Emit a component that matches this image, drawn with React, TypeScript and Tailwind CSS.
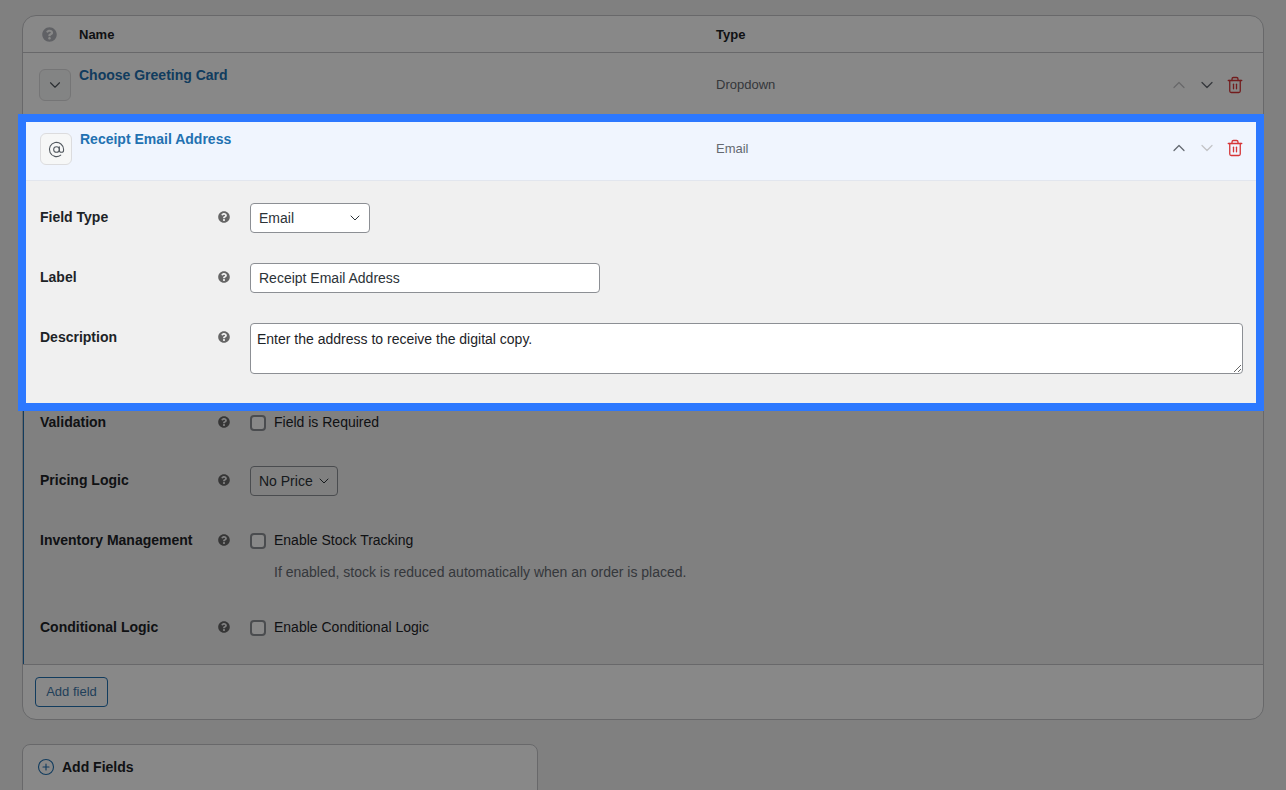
import { AtSign, ChevronDown, ChevronUp, CirclePlus, Trash2 } from "lucide-react";
import { FaQuestionCircle } from "react-icons/fa";

function Help() {
  return <FaQuestionCircle size={12} className="text-[#666666]" />;
}

function RowActions({ upOff, downOff }: { upOff?: boolean; downOff?: boolean }) {
  return (
    <div className="flex items-center gap-2">
      <ChevronUp size={20} strokeWidth={1.5} className={upOff ? "text-[#c3c4c7]" : "text-[#646970]"} />
      <ChevronDown size={20} strokeWidth={1.5} className={downOff ? "text-[#c3c4c7]" : "text-[#646970]"} />
      <Trash2 size={18} strokeWidth={1.75} className="mx-px text-[#d63638]" />
    </div>
  );
}

function FormRow({ label, className, children }: { label: string; className: string; children: React.ReactNode }) {
  return (
    <div className={`flex items-start ${className}`}>
      <div className="w-[178px] text-sm font-bold leading-4 text-[#1d2327]">{label}</div>
      <div className="w-[32px] pt-0.5">
        <Help />
      </div>
      <div className="min-w-0 flex-1">{children}</div>
    </div>
  );
}

function Check({ label }: { label: string }) {
  return (
    <label className="flex items-center gap-2 text-sm leading-4 text-[#1d2327]">
      <span className="size-4 translate-y-px rounded-[4px] border-2 border-[#8c8f94] bg-white" />
      {label}
    </label>
  );
}

export default function App() {
  return (
    <div className="h-screen overflow-hidden bg-[#f0f0f1] px-[22px] pt-[15px] font-['Liberation_Sans',Arial,sans-serif]">
      <div className="rounded-[14px] border border-[#c3c4c7] bg-white">
        {/* Table head */}
        <div className="flex h-[37px] items-center border-b border-[#c3c4c7] text-[13px] font-bold text-[#1d2327]">
          <div className="w-[56px] pl-[19px]">
            <FaQuestionCircle size={15} className="text-[#b4b7bd]" />
          </div>
          <div className="w-[637px] pt-0.5">Name</div>
          <div className="pt-0.5">Type</div>
        </div>

        {/* Collapsed field */}
        <div className="flex h-[69px] items-start">
          <div className="ml-4 mt-4 flex size-8 items-center justify-center rounded-md border border-[#dcdcde] bg-[#f6f7f7]">
            <ChevronDown size={18} strokeWidth={1.5} className="text-[#50575e]" />
          </div>
          <div className="ml-2 mt-[13px] w-[637px] text-sm font-bold leading-[18px] text-[#2271b1]">
            Choose Greeting Card
          </div>
          <div className="mt-[24px] flex-1 text-[13px] leading-4 text-[#646970]">Dropdown</div>
          <div className="mt-[22px] pr-[18px]">
            <RowActions upOff />
          </div>
        </div>

        {/* Expanded field */}
        <div className="border-l border-[#2271b1] bg-[#f0f0f1]">
          <div className="relative z-10 ml-0.5 mr-[7px] bg-[#f0f0f0] shadow-[0_0_0_8px_#2c78ff,0_0_0_9999px_rgba(0,0,0,0.467)]">
            <div className="flex h-[59px] items-start border-b border-[#e2e6ee] bg-[#f0f5fe]">
              <div className="ml-3.5 mt-[11px] flex size-8 items-center justify-center rounded-md border border-[#dcdcde] bg-[#f6f7f7]">
                <AtSign size={17} strokeWidth={1.5} className="text-[#50575e]" />
              </div>
              <div className="ml-2 mt-2 w-[636px] text-sm font-bold leading-[18px] text-[#2271b1]">
                Receipt Email Address
              </div>
              <div className="mt-[19px] flex-1 text-[13px] leading-4 text-[#646970]">Email</div>
              <div className="mt-4 pr-[11px]">
                <RowActions downOff />
              </div>
            </div>
            <div className="h-[222px] pl-3.5 pr-[13px] pt-7">
              <FormRow label="Field Type" className="h-[60px]">
                <div className="-mt-1.5 flex h-[30px] w-[120px] items-center justify-between rounded border border-[#8c8f94] bg-white pl-2 pr-[6px] text-sm text-[#2c3338]">
                  Email
                  <ChevronDown size={16} strokeWidth={1.5} />
                </div>
              </FormRow>
              <FormRow label="Label" className="h-[60px]">
                <input
                  readOnly
                  value="Receipt Email Address"
                  className="-mt-1.5 block h-[30px] w-[350px] rounded border border-[#8c8f94] bg-white px-2 text-sm text-[#2c3338] outline-none"
                />
              </FormRow>
              <FormRow label="Description" className="h-[60px]">
                <textarea
                  readOnly
                  defaultValue="Enter the address to receive the digital copy."
                  className="-mt-1.5 block h-[51px] w-full rounded border border-[#8c8f94] bg-white px-1.5 pb-1 pt-1.5 text-sm leading-[18px] text-[#1d2327] outline-none"
                />
              </FormRow>
            </div>
          </div>

          {/* Rest of the expanded form, under the dim layer */}
          <div className="h-[261px] pl-4 pr-5 pt-[11px]">
            <FormRow label="Validation" className="h-[58px]">
              <Check label="Field is Required" />
            </FormRow>
            <FormRow label="Pricing Logic" className="h-[60px]">
              <div className="-mt-1.5 flex h-[30px] w-[88px] items-center justify-between rounded border border-[#8c8f94] bg-transparent pl-2 pr-[5px] text-sm text-[#2c3338]">
                No Price
                <ChevronDown size={16} strokeWidth={1.5} />
              </div>
            </FormRow>
            <FormRow label="Inventory Management" className="h-[87px]">
              <Check label="Enable Stock Tracking" />
              <p className="ml-6 mt-4 text-sm leading-4 text-[#646970]">
                If enabled, stock is reduced automatically when an order is placed.
              </p>
            </FormRow>
            <FormRow label="Conditional Logic" className="h-[40px]">
              <Check label="Enable Conditional Logic" />
            </FormRow>
          </div>
        </div>

        {/* Footer */}
        <div className="h-[55px] rounded-b-[14px] border-t border-[#c3c4c7] pl-3 pt-3">
          <button className="block h-[30px] w-[73px] rounded border border-[#2271b1] bg-transparent text-[13px] text-[#3f78a8]">
            Add field
          </button>
        </div>
      </div>

      <div className="mt-6 h-[120px] w-[516px] rounded-lg border border-[#c3c4c7] bg-white">
        <div className="flex items-center gap-[7px] pl-3.5 pt-[13px] text-sm font-bold leading-[18px] text-[#1d2327]">
          <CirclePlus size={18} strokeWidth={1.5} className="text-[#2271b1]" />
          Add Fields
        </div>
      </div>
    </div>
  );
}
